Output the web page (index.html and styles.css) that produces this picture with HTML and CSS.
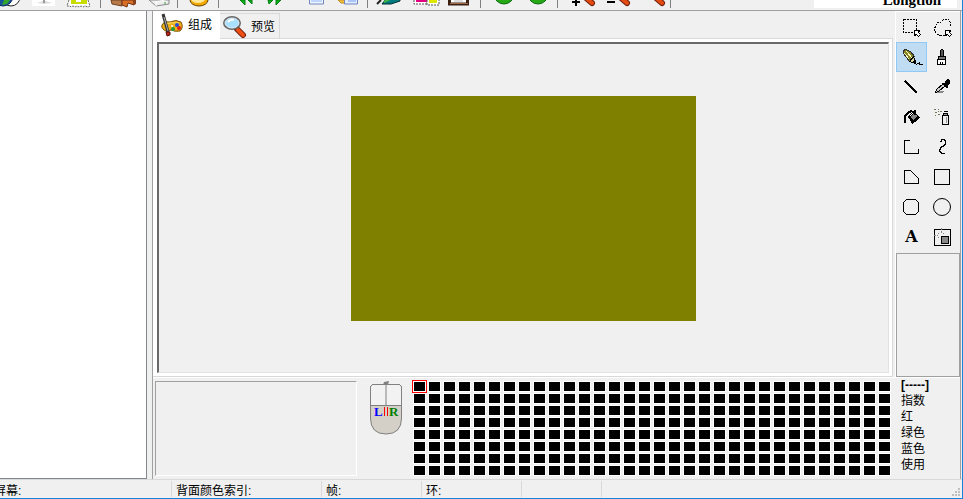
FILE: index.html
```html
<!DOCTYPE html>
<html lang="zh-CN">
<head>
    <meta charset="UTF-8">
    <meta name="viewport" content="width=device-width, initial-scale=1.0">
    <title>Longtion</title>
    <link rel="stylesheet" href="styles.css">
</head>
<body>
    <div class="app">
        <header class="toolbar">
            <div class="tool-group first">
                <button aria-label="Web"><svg width="26" height="8"><circle cx="11" cy="-3" r="9" fill="#fff" stroke="#222"/><circle cx="3" cy="-4" r="10" fill="#17539c" stroke="#0a2c60"/><path d="M4 0l6 0-3 4-5 1z" fill="#35a52c"/></svg></button>
                <button aria-label="Image"><svg width="36" height="8"><path fill="#fff" d="M6 0h23v6H6z"/><path fill="#ddd" d="M11 3l6-2h3l6 2-8 1z"/><path fill="#999" d="M17 0h2v3h-2z"/></svg></button>
                <button aria-label="Stamp"><svg width="36" height="8"><path d="M7 0l-2 6 3 0 1 1 2-1 2 1 2-1 2 1 2-1 2 1 2-1 3 1 2-1-2-6" fill="#fff" stroke="#666" stroke-dasharray="2 1"/><path fill="#c9dc00" d="M9 0h16v4H9z"/><path fill="#fff" d="M14 0h5v2h-5z"/></svg></button>
            </div>
            <div class="tool-group">
                <button aria-label="Package"><svg width="36" height="8"><path d="M8 0l1 4 10 2V0z" fill="#b77b4b" stroke="#70401c"/><path d="M19 0v5l5 2 1-4 6 2V0z" fill="#d86f24" stroke="#70351a"/><path d="M31 5l2-1V0h-3z" fill="#84411f"/></svg></button>
                <button aria-label="Box"><svg width="36" height="8"><path d="M10 0l7 6 13-2V0z" fill="#eee" stroke="#888"/><path d="M17 6V2l13-3" fill="none" stroke="#fff"/><path d="M25 3h2" stroke="#3a3"/></svg></button>
            </div>
            <div class="tool-group">
                <button aria-label="Database"><svg width="36" height="8"><ellipse cx="19" cy="0" rx="9" ry="6" fill="#f1a900" stroke="#684000"/><ellipse cx="18" cy="-1" rx="7" ry="4" fill="#ffe89a"/></svg></button>
            </div>
            <div class="tool-group">
                <button aria-label="Undo"><svg width="36" height="8"><path d="M19 0h5v5zM27 0h4v4z" fill="#08b818" stroke="#087810"/></svg></button>
                <button aria-label="Redo"><svg width="36" height="8"><path d="M11 0h5l-4 4zM19 0h5l-5 5z" fill="#08b818" stroke="#087810"/></svg></button>
                <button aria-label="New frame"><svg width="36" height="8"><path d="M16.500-1h14v5h-14z" fill="#eef5ff" stroke="#7185bd"/><path fill="#bfd5fc" d="M18 0h11v2H18z"/></svg></button>
                <button aria-label="Copy frame"><svg width="36" height="8"><path d="M9 0h7v3h-4z" fill="#f5c344" stroke="#bd8b22"/><path d="M15.500-1h13v5h-13z" fill="#e2edff" stroke="#7185bd"/><path fill="#a9c5fa" d="M19 0h8v2h-8z"/></svg></button>
            </div>
            <div class="tool-group">
                <button aria-label="Layers"><svg width="36" height="8"><path d="M12 4l4-5h14v2l-9 3z" fill="#007b80" stroke="#002d30"/><path d="M14 2l6-3" stroke="#44b847" stroke-width="2"/><path d="M7 4l4-4" stroke="#222" stroke-width="2"/></svg></button>
                <button aria-label="Stamps"><svg width="36" height="8"><path d="M8 0v4h13V0" fill="#fff" stroke="#555" stroke-dasharray="2 1"/><path fill="#e40080" d="M10 0h11v2H10z"/><path d="M21 0v5h12V0" fill="#fff" stroke="#555" stroke-dasharray="2 1"/><path fill="#dce800" d="M23 0h8v3h-8z"/></svg></button>
                <button aria-label="Frame"><svg width="36" height="8"><path d="M7.500-2v6h18v-6" fill="#fff" stroke="#3b1f12" stroke-width="3"/><path d="M8 3.500h18" stroke="#9e6745"/><path d="M12 1h9" stroke="#bbb"/></svg></button>
            </div>
            <div class="tool-group">
                <button aria-label="Play"><svg width="36" height="8"><circle cx="21" cy="-6" r="10" fill="#25aa16" stroke="#08670c"/></svg></button>
                <button aria-label="Stop"><svg width="36" height="8"><circle cx="19" cy="-6" r="10" fill="#25aa16" stroke="#08670c"/></svg></button>
            </div>
            <div class="tool-group">
                <button aria-label="Zoom in"><svg width="36" height="8"><path d="M12 2h8M16 0v6" stroke="#000" stroke-width="2"/><path d="M25-3l7 6" stroke="#6d2010" stroke-width="6" stroke-linecap="round"/><path d="M25-3l7 6" stroke="#e34b10" stroke-width="4" stroke-linecap="round"/></svg></button>
                <button aria-label="Zoom out"><svg width="36" height="8"><path d="M11 2h8" stroke="#000" stroke-width="2"/><path d="M24-3l7 6" stroke="#6d2010" stroke-width="6" stroke-linecap="round"/><path d="M24-3l7 6" stroke="#e34b10" stroke-width="4" stroke-linecap="round"/></svg></button>
                <button aria-label="Zoom"><svg width="36" height="8"><path d="M23-3l7 6" stroke="#6d2010" stroke-width="6" stroke-linecap="round"/><path d="M23-3l7 6" stroke="#e34b10" stroke-width="4" stroke-linecap="round"/></svg></button>
            </div>
            <div class="brand">Longtion</div>
        </header>

        <div class="body">
            <aside class="frames"></aside>
            <main class="main">
                <div class="upper">
                    <section class="pages">
                        <nav class="tabs">
                            <button class="tab active">
                                <svg width="24" height="24" viewBox="0 0 24 24">
                                    <path d="M2 12q2-4 8-3 6-3 11 0 3 5-1 9-5 1-9-1-5 3-8-1-2-2-1-4z" fill="#edae15" stroke="#795000"/>
                                    <path d="M4 11q7-2 15-1" stroke="#ffe569" fill="none"/>
                                    <circle cx="17" cy="12" r="2" fill="#244ed8"/><circle cx="19" cy="15" r="2" fill="#dc2018"/><circle cx="13" cy="16" r="2" fill="#269c39"/><circle cx="12" cy="13" r="1" fill="#fff"/>
                                    <path d="M3 1l5 18" stroke="#333" stroke-width="3"/><path d="M4 4l4 14" stroke="#aaa"/><path d="M6 19h4v3l-3 1z" fill="#c42214" stroke="#56130c"/>
                                </svg>组成</button>
                            <button class="tab">
                                <svg width="24" height="24" viewBox="0 0 24 24">
                                    <path d="M14 14l6 6" stroke="#6d1d0d" stroke-width="6" stroke-linecap="round"/><path d="M15 15l5 5" stroke="#ed4e16" stroke-width="4" stroke-linecap="round"/>
                                    <ellipse cx="9" cy="8" rx="8" ry="6" fill="#a9e0ff" stroke="#666" stroke-width="2"/><ellipse cx="9" cy="8" rx="7" ry="5" fill="none" stroke="#e4f1fa"/>
                                    <path d="M5 7q2-3 6-2" stroke="#fff" stroke-width="2" fill="none"/>
                                </svg>预览</button>
                        </nav>
                        <div class="page">
                            <div class="stage"><div class="artboard"></div></div>
                        </div>
                    </section>

                    <aside class="tools">
                        <div class="tool-grid">
                            <button aria-label="Select"><svg><rect x="7.500" y="7.500" width="13" height="13" stroke-dasharray="2 1"/><use href="#cursor"/></svg></button>
                            <button aria-label="Lasso"><svg><path d="M8.500 13.500l2-3h3l3-3h5l2 3v3l-2 2M17.500 23.500h-4l-3-1-2-2-1-3 1-4" stroke-dasharray="2 1"/><use href="#cursor"/></svg></button>
                            <button class="selected" aria-label="Pencil"><svg><path d="M7.500 8.500l2-1 5 2 4 5-5 5-3-4-3-4z" fill="#858521" stroke="#333"/><path d="M10.500 9.500l6 7M8.500 11.500l5 6" stroke="#fffbc0"/><path d="M13.500 19.500l4-5 2 7z" fill="#d8d8a0"/><path d="M17 20l2-2 1 4z" fill="#000"/><path d="M19.500 21.500l1 1 3-2v2h3"/></svg></button>
                            <button aria-label="Brush"><svg><path d="M13.500 14.500v-6l1-1h1l1 1v6z" fill="#555"/><path d="M11.500 14.500h7v3h-7z" fill="#777"/><path d="M10.500 17.500h8v5h-8z" fill="#fff"/><path d="M13.500 20v3M15.500 20v3"/></svg></button>
                            <button aria-label="Line"><svg><path d="M9 9l12 12" stroke-width="2"/></svg></button>
                            <button aria-label="Eyedropper"><svg><path d="M8 21h7l2-2h-7z" fill="#888" stroke="none"/><path d="M8.500 20.500l1-3 7-6 2 2-7 6z" fill="#ccc"/><path d="M15.500 11.500h2l2-3 2-1 1 1v3l-2 2v2h-1z" fill="#000"/></svg></button>
                            <button aria-label="Fill"><svg><path d="M12.500 14.500l5-5 6 6-7 6z" fill="#000"/><path d="M14 15l4-4 3 3-4 4z" fill="#888" stroke="none"/><path d="M8.500 21v-6l3-4 4-2 2 2M18.500 8v5" stroke-width="2"/><path d="M14 14l3-3" stroke="#fff"/></svg></button>
                            <button aria-label="Spray"><svg><path d="M15.500 13.500h6v9h-6z" fill="#eee"/><path d="M16.500 13v-2h4v2M16.500 9.500h4" fill="#999"/><path d="M19.500 15v6" stroke="#999"/><path d="M7 7.500h2M11 7.500h1M13 9.500h2M8 10.500h2M11 9.500h1M8 13.500h1M11 12.500h2" stroke="#76765a"/></svg></button>
                            <button aria-label="Polyline"><svg><path d="M14 8.500H8.500v13h14V17"/></svg></button>
                            <button aria-label="Curve"><svg><path d="M13 9.500h1v-2h3v1h1v4h-1v1h-1v1h-2v1h-1v2h-1v2h1v1h1v1h3v-1"/></svg></button>
                            <button aria-label="Polygon"><svg><path d="M8.500 8.500h6l8 8v5h-14z"/></svg></button>
                            <button aria-label="Rectangle"><svg><rect x="7.500" y="7.500" width="15" height="15"/></svg></button>
                            <button aria-label="Rounded rectangle"><svg><path d="M10.500 7.500h9l3 3v9l-3 3h-9l-3-3v-9z"/></svg></button>
                            <button aria-label="Ellipse"><svg class="smooth"><circle cx="15" cy="15" r="8.500"/></svg></button>
                            <button class="text-tool">A</button>
                            <button aria-label="Hotspot"><svg><rect x="7.500" y="7.500" width="16" height="16"/><rect x="14.500" y="14.500" width="7" height="7" fill="#888"/><path d="M7 13.500h2M10 13.500h1M14.500 6v2M14.500 9v2M11 11.500h1M16 11.500h1M11 15.500h1" stroke="#888"/></svg></button>
                        </div>
                        <div class="tool-options"></div>
                    </aside>
                </div>

                <div class="lower">
                    <div class="preview"></div>
                    <svg class="mouse" width="34" height="54" viewBox="0 0 34 54">
                        <path d="M1.500 5.500l2-2h27l2 2V37q0 16-15.500 16T1.500 37z" fill="#d4d0c8" stroke="#808080"/>
                        <path d="M2 24V6l2-2h26l2 2v18z" fill="#f2f2f2"/>
                        <path d="M1.500 24.500h31M17 4v20M1.500 37V5.500l2-2h27l2 2V37" fill="none" stroke="#808080"/>
                        <path d="M14 4l1-3 5-1-1 4z" fill="#808080"/>
                        <path d="M15 26h1v9h-1zM18 26h1v9h-1z" fill="#ff0000"/>
                        <text x="5" y="35" fill="#00f">L</text><text x="20" y="35" fill="#008000">R</text>
                    </svg>
                    <div class="palette" id="palette"></div>
                    <div class="info">
                        <b>[-----]</b>
                        <span>指数</span>
                        <span>红</span>
                        <span>绿色</span>
                        <span>蓝色</span>
                        <span>使用</span>
                    </div>
                </div>
            </main>
        </div>

        <footer class="status">
            <span class="cell screen">屏幕:</span>
            <span class="cell wide">背面颜色索引:</span>
            <span class="cell">帧:</span>
            <span class="cell">环:</span>
            <span class="cell narrow"></span>
            <svg class="grip" width="9" height="9"><path d="M6 0h2v2H6zM3 3h2v2H3zM6 3h2v2H6zM0 6h2v2H0zM3 6h2v2H3zM6 6h2v2H6z" fill="#bfbfbf"/></svg>
        </footer>
    </div>

    <svg class="defs" width="0" height="0">
        <symbol id="cursor" overflow="visible"><path d="M18.500 18.500h5l-1 2 2 2-2 2-2-2-2 1z" fill="#fff" stroke="#000" stroke-dasharray="none"/></symbol>
    </svg>

    <script>
        // 256 colour palette, 32 per row
        const palette = document.getElementById('palette');
        for (let i = 0; i < 256; i++) {
            const swatch = document.createElement('button');
            swatch.className = i === 0 ? 'swatch current' : 'swatch';
            swatch.setAttribute('aria-label', i);
            palette.appendChild(swatch);
        }
    </script>
</body>
</html>
```

FILE: styles.css
```css
* {
    box-sizing: border-box;
}
body {
    margin: 0;
    overflow: hidden;
    background: #f0f0f0;
    color: #000;
    font: 12px/16px "Liberation Sans", "Noto Sans CJK SC", sans-serif;
}
button {
    padding: 0;
    border: 0;
    background: none;
    color: inherit;
    font: inherit;
}
svg {
    display: block;
    flex: none;
}
.defs {
    position: absolute;
}
.app {
    display: flex;
    flex-direction: column;
    height: 100vh;
    border-right: 1px solid #1883d7;
    border-bottom: 1px solid #1883d7;
}

/* Toolbar */
.toolbar {
    display: flex;
    height: 11px;
    align-items: flex-start;
    border-bottom: 1px solid #a0a0a0;
}
.tool-group {
    display: flex;
    height: 8px;
    padding: 0 2px;
    border-right: 1px solid #808080;
}
.tool-group.first {
    padding-left: 0;
}
.brand {
    display: flex;
    justify-content: flex-end;
    align-items: flex-end;
    width: 143px;
    height: 8px;
    margin: 0 5px 0 auto;
    padding: 0 16px 0 0;
    overflow: hidden;
    background: #fff;
    font: bold 15px/16px "Liberation Serif", serif;
}

.body {
    display: flex;
    flex: 1;
    min-height: 0;
}
.frames {
    width: 147px;
    margin-right: 5px;
    background: #fff;
    border-right: 1px solid #828790;
    border-bottom: 1px solid #828790;
}
.main {
    display: flex;
    flex: 1;
    flex-direction: column;
    margin-right: 1px;
    border-left: 1px solid #a0a0a0;
    border-right: 1px solid #a0a0a0;
}
.upper {
    display: flex;
    flex: 1;
    gap: 2px;
}

/* Pages */
.pages {
    display: flex;
    flex: 1;
    flex-direction: column;
}
.tabs {
    display: flex;
    height: 28px;
    align-items: flex-end;
    border-bottom: 1px solid #d9d9d9;
}
.tab {
    display: flex;
    height: 25px;
    padding: 2px 4px 0 3px;
    align-items: center;
    gap: 4px;
    border-top: 1px solid #d9d9d9;
    border-right: 1px solid #d9d9d9;
}
.tab.active {
    height: 28px;
    padding: 0 8px 0 7px;
    margin-bottom: -1px;
    border: 0;
    background: #fff;
}
.page {
    display: flex;
    flex: 1;
    padding: 3px 3px 3px 4px;
    background: #fff;
    border-right: 1px solid #d9d9d9;
    border-bottom: 1px solid #d9d9d9;
}
.stage {
    display: flex;
    flex: 1;
    align-items: center;
    justify-content: center;
    background: #f0f0f0;
    border: 2px solid #696969;
    border-right: 1px solid #e3e3e3;
    border-bottom: 1px solid #e3e3e3;
}
.artboard {
    width: 345px;
    height: 225px;
    background: #808000;
}

/* Drawing tools */
.tools {
    display: flex;
    flex-direction: column;
    width: 65px;
    border-top: 1px solid #fff;
    border-left: 1px solid #fff;
}
.tool-grid {
    display: grid;
    grid-template-columns: 31px 31px;
    grid-auto-rows: 30px;
}
.tool-grid svg {
    width: 31px;
    height: 30px;
    fill: none;
    stroke: #000;
    shape-rendering: crispEdges;
}
.tool-grid .smooth {
    shape-rendering: auto;
}
.tool-grid .selected {
    background: #c0dcf3;
    outline: 1px solid #90c8f6;
    outline-offset: -1px;
}
.text-tool {
    font: bold 16px/30px "DejaVu Serif", serif;
}
.tool-options {
    flex: 1;
    margin-top: 1px;
    border: 1px solid #a0a0a0;
}

/* Palette area */
.lower {
    display: flex;
    padding: 3px 2px 3px;
    border-top: 1px solid #fff;
}
.preview {
    flex: 1;
    border: 1px solid #a0a0a0;
    border-right-color: #fff;
    border-bottom-color: #fff;
}
.mouse {
    margin: 0 10px 0 12px;
    font: bold 13px "Liberation Serif", serif;
}
.palette {
    display: grid;
    grid-template-columns: repeat(32, 13px);
    grid-auto-rows: 11px;
    gap: 1px 2px;
    align-content: start;
}
.swatch {
    background: #000;
    border: 1px solid #fff;
}
.swatch.current {
    box-shadow: 0 0 0 1px #ff0000;
}
.info {
    display: flex;
    flex-direction: column;
    width: 67px;
    padding-left: 10px;
}
.info b {
    margin-bottom: 4px;
    line-height: 8px;
}

/* Status bar */
.status {
    display: flex;
    height: 19px;
    padding: 1px 0;
    border-top: 1px solid #d9d9d9;
    line-height: 20px;
}
.cell {
    width: 100px;
    padding-left: 4px;
    border-right: 1px solid #d9d9d9;
}
.cell.screen {
    width: 172px;
    padding: 0;
    text-indent: -6px;
}
.cell.wide {
    width: 150px;
}
.cell.narrow {
    width: 80px;
}
.grip {
    margin: auto 1px 0 auto;
}
```
